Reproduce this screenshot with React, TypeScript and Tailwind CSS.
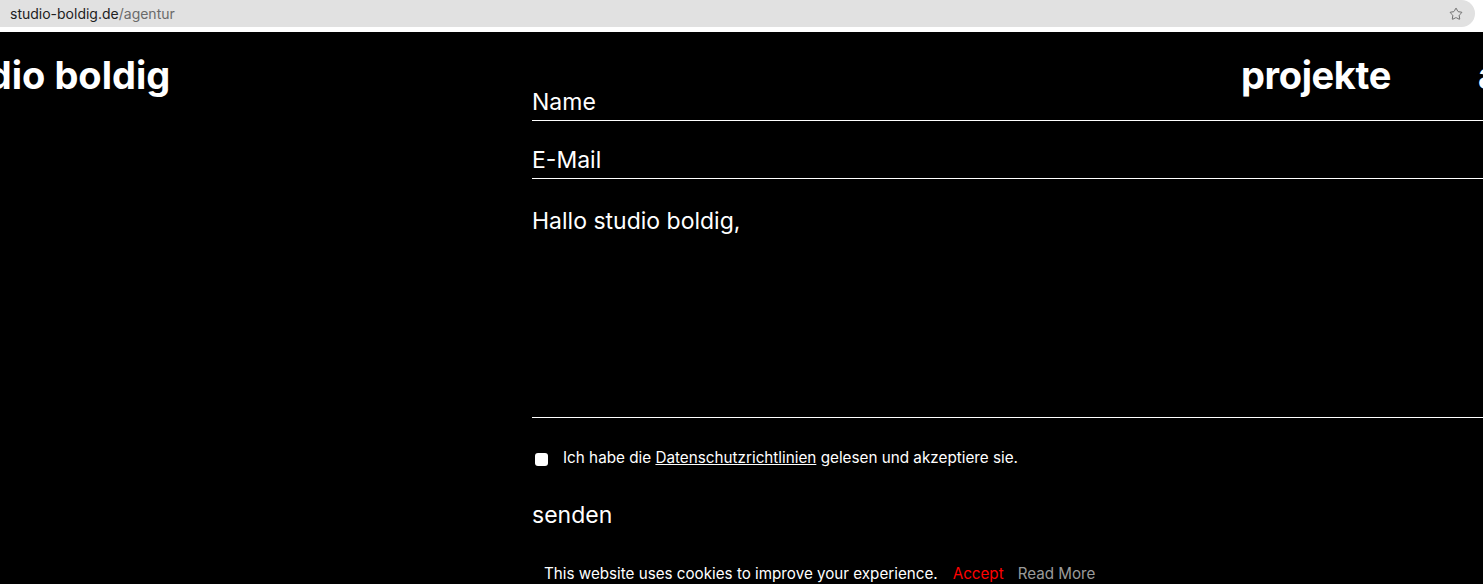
import React from "react";
import { Star } from "lucide-react";

export default function App() {
  return (
    <div className="w-[1483px] h-[584px] overflow-hidden bg-white" style={{ fontFamily: "Inter, 'Noto Sans', sans-serif" }}>
      {/* browser chrome */}
      <div className="h-[32px] bg-white pr-[8px]">
        <div className="h-[27px] bg-[#e1e1e1] rounded-br-[14px] rounded-tr-[14px] flex items-center pl-[10px] pr-[12px]">
          <span className="text-[14px] text-[#202020] leading-none mt-[1px]">
            studio-boldig.de<span className="text-[#6a6a6a]">/agentur</span>
          </span>
          <Star className="ml-auto text-[#555]" size={14} strokeWidth={1.4} />
        </div>
      </div>

      {/* page */}
      <div className="relative h-[552px] bg-black text-white overflow-hidden">
        {/* fixed header overlay */}
        <div className="absolute top-[24px] left-0 right-0 text-[38px] font-bold leading-none whitespace-nowrap">
          <div className="-ml-[71px]">studio boldig</div>
          <div className="absolute top-0 left-[1241px] flex gap-[87px] tracking-[-0.01em]">
            <span>projekte</span>
            <span>agentur</span>
          </div>
        </div>

        <form className="ml-[532px] pt-[57px]">
          <div className="text-[23px] leading-[26px] pb-[5px] border-b border-white">Name</div>
          <div className="mt-[26px] text-[23px] leading-[26px] pb-[5px] border-b border-white">E-Mail</div>
          <div className="mt-[29px] h-[210px] text-[23px] leading-[26px] border-b border-white">Hallo studio boldig,</div>
          <label className="mt-[30px] flex items-center text-[15.25px] leading-[20px]">
            <input type="checkbox" className="appearance-none bg-white rounded-[3px] w-[13px] h-[13px] ml-[3px] mr-[15px] mt-[2px]" />
            <span>
              Ich habe die <span className="underline">Datenschutzrichtlinien</span> gelesen und akzeptiere sie.
            </span>
          </label>
          <div className="mt-[34px] text-[23px] leading-[26px]">senden</div>
          <div className="mt-[36px] ml-[12px] flex text-[15.2px] leading-[20px] whitespace-nowrap">
            <span>This website uses cookies to improve your experience.</span>
            <span className="ml-[15px] text-[#ff0000]">Accept</span>
            <span className="ml-[14px] text-[#9a9a9a]">Read More</span>
          </div>
        </form>
      </div>
    </div>
  );
}
